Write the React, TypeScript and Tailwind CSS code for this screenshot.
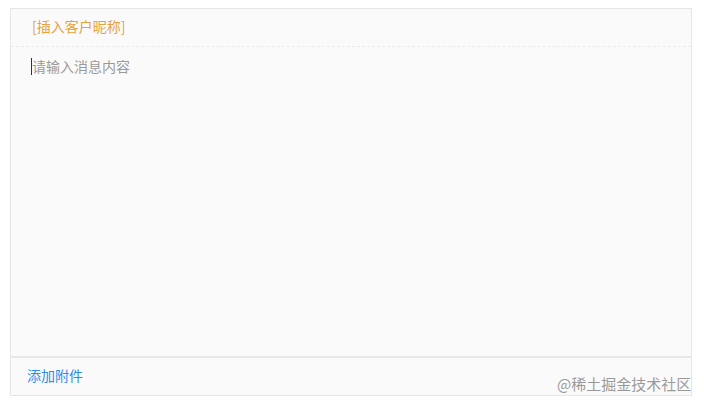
export default function App() {
  return (
    <div className="relative w-[704px] h-[406px] bg-white" style={{ fontFamily: "'Noto Sans CJK SC', 'Liberation Sans', sans-serif" }}>
      <div className="absolute left-[10px] top-[8px] w-[682px] h-[388px] border border-[#e6e6e6] bg-[#fafafa] flex flex-col">
        <div className="h-[38px] flex items-center pl-[21px] pb-[3px] border-b border-dashed border-[#ececec]">
          <span className="text-[14px] text-[#e6a23c] leading-none">[插入客户昵称]</span>
        </div>
        <div className="flex-1 pl-[20px] pt-[9px]">
          <div className="flex items-center">
            <span className="w-px h-[17px] bg-[#333]" />
            <span className="text-[14px] text-[#9a9a9a] leading-[20px]">请输入消息内容</span>
          </div>
        </div>
        <div className="h-[39px] border-t-2 border-[#e8e8e8] flex items-center pl-[16px] pb-[3px]">
          <span className="text-[14px] text-[#2d8cf0] leading-none">添加附件</span>
        </div>
      </div>
      <div className="absolute left-[557px] top-[374px] text-[15px] text-[#9a9a9a] leading-[20px]">@稀土掘金技术社区</div>
    </div>
  );
}
